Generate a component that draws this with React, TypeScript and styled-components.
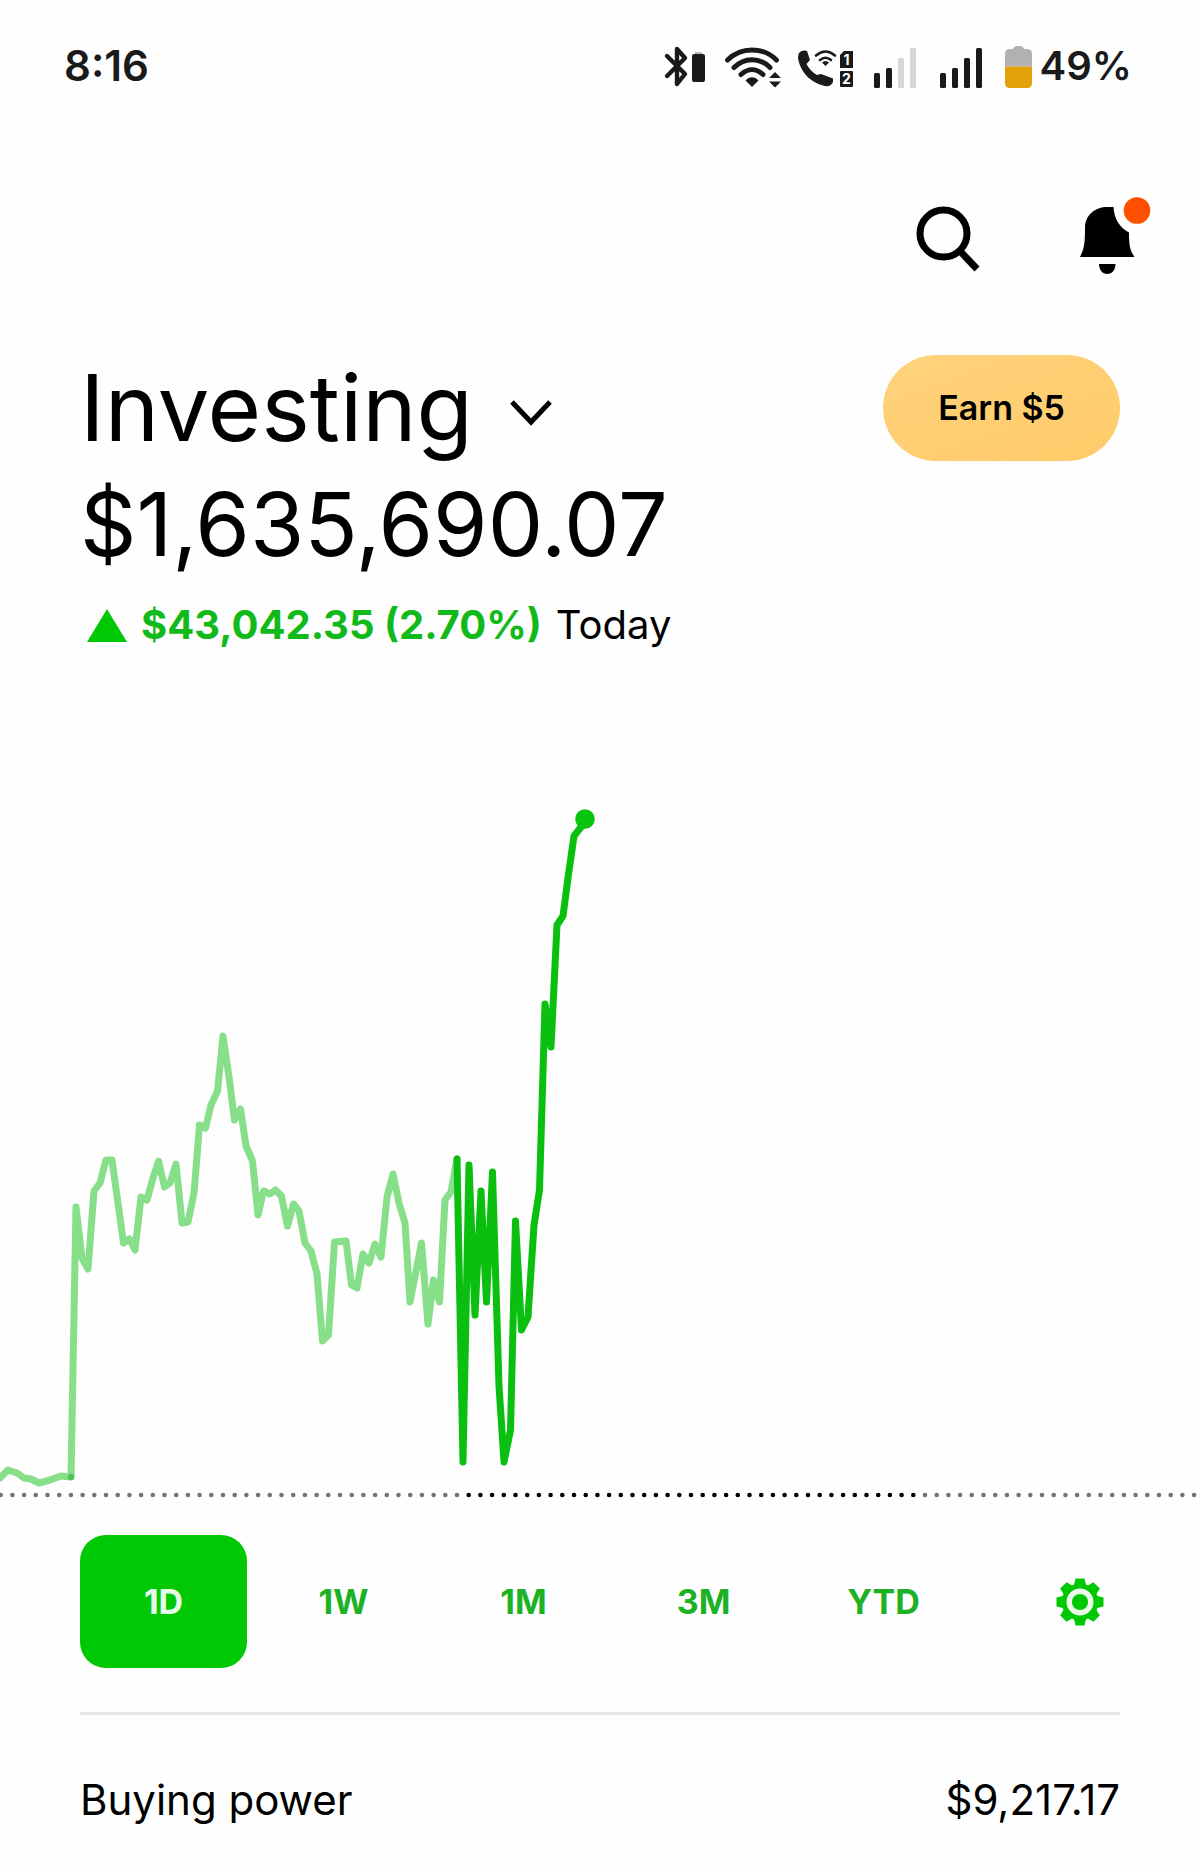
import React, { useState } from 'react';
import styled, { createGlobalStyle } from 'styled-components';

const GREEN = '#00c805';
const INK = '#1a1a1a';

const GlobalStyle = createGlobalStyle`
  *, *::before, *::after { box-sizing: border-box; }
  body {
    margin: 0;
    background: #fefefe;
    color: #000;
    font-family: Inter, Roboto, sans-serif;
  }
  button {
    font: inherit;
    color: inherit;
    padding: 0;
    border: 0;
    background: none;
    cursor: pointer;
  }
  svg { display: block; flex: none; }
`;

const Screen = styled.main`
  display: flex;
  flex-direction: column;
  padding-bottom: 47px;
`;

const StatusBar = styled.header`
  display: flex;
  align-items: center;
  justify-content: space-between;
  padding: 42px 68px 0 64px;
  font-size: 40px;
  line-height: 48px;
  font-weight: 600;
  color: ${INK};
`;

const Clock = styled.time`
  font-size: 42px;
`;

const StatusIcons = styled.div`
  display: flex;
  align-items: center;
  gap: 14px;
`;

const Battery = styled.div`
  display: flex;
  align-items: center;
  gap: 8px;
`;

const Actions = styled.nav`
  display: flex;
  justify-content: flex-end;
  gap: 96px;
  padding: 100px 48px 0 80px;
`;

const Summary = styled.section`
  display: flex;
  flex-direction: column;
  padding: 74px 80px 0;
`;

const TitleRow = styled.div`
  display: flex;
  align-items: center;
  justify-content: space-between;
`;

const Title = styled.h1`
  margin: 0;
  font-size: 92px;
  line-height: 108px;
  font-weight: 400;
`;

const AccountPicker = styled.button`
  display: flex;
  align-items: center;
  gap: 36px;
`;

const EarnButton = styled.button`
  height: 106px;
  padding: 0 55px;
  border-radius: 53px;
  background: linear-gradient(160deg, #ffd27c, #ffcb69);
  font-size: 34px;
  line-height: 40px;
  font-weight: 600;
`;

const Balance = styled.p`
  margin: 12px 0 0;
  font-size: 88px;
  line-height: 100px;
`;

const Change = styled.p`
  display: flex;
  align-items: center;
  gap: 14px;
  margin: 27px 0 0;
  padding-left: 7px;
  font-size: 40px;
  line-height: 48px;
`;

const Gain = styled.strong`
  font-weight: 700;
  color: #12b91a;
`;

const Chart = styled.svg`
  width: 100%;
  height: auto;
  margin-top: 51px;
`;

const Ranges = styled.div`
  display: flex;
  align-items: center;
  justify-content: space-between;
  gap: 13px;
  padding: 25px 80px 44px;
`;

const RangeTabs = styled.div`
  display: flex;
  flex: 0 1 887px;
  gap: 13px;
`;

const RangeTab = styled.button<{ $active: boolean }>`
  flex: 1;
  height: 133px;
  border-radius: 26px;
  background: ${(p) => (p.$active ? GREEN : 'transparent')};
  color: ${(p) => (p.$active ? '#e9fbe9' : '#1db125')};
  font-size: 34px;
  line-height: 40px;
  font-weight: 700;
`;

const SettingsButton = styled.button`
  display: grid;
  place-items: center;
  width: 80px;
  height: 80px;
`;

const DetailRow = styled.dl`
  display: flex;
  justify-content: space-between;
  margin: 0 80px;
  padding-top: 61px;
  border-top: 3px solid #e6e6e6;
  font-size: 42px;
  line-height: 48px;

  dd { margin: 0; }
`;

const BluetoothIcon = () => (
  <svg width="46" height="48" viewBox="0 0 46 48" aria-label="Bluetooth">
    <path
      d="M4 14 22 32 14 42V7L22 16 4 34"
      fill="none"
      stroke={INK}
      strokeWidth="4.400"
      strokeLinecap="round"
      strokeLinejoin="round"
    />
    <rect x="29" y="12" width="13" height="28" rx="2" fill={INK} />
    <rect x="32" y="10" width="7" height="2" fill="#b8b8b8" />
  </svg>
);

const WifiIcon = () => (
  <svg width="60" height="48" viewBox="0 0 60 48" aria-label="Wi-Fi">
    <g fill="none" stroke={INK} strokeWidth="5" strokeLinecap="round">
      <path d="M4.500 18C18 4.500 40 4.500 53.500 18" />
      <path d="M11 25.500C21.500 15 36.500 15 47 25.500" />
      <path d="M18 32.500C25 26 33 26 40 32.500" />
    </g>
    <path d="M22.500 38.500C26 34 32 34 35.500 38.500L29 45Z" fill={INK} />
    <path d="M46 36 52 30 58 36ZM46 39.500H58L52 45.500Z" fill={INK} />
  </svg>
);

const WifiCallingIcon = () => (
  <svg width="62" height="48" viewBox="0 0 62 48" aria-label="Wi-Fi calling, SIM 1 and 2">
    <path
      d="M2 11Q4 8 8 8.500L10 9 13 18 9.500 22Q13 29 20 33L24 32 36 36.500 36 40Q34 45 28 44C14 41 3 30 1 16Q1 13 2 11Z"
      fill={INK}
    />
    <g fill="none" stroke={INK} strokeWidth="2.600" strokeLinecap="round">
      <path d="M19 13.500Q28.500 5.500 38 13.500" />
      <path d="M23 18Q28.500 13.500 34 18" />
    </g>
    <path d="M25 20.500Q28.500 17.500 32 20.500L28.500 24Z" fill={INK} />
    <path d="M47 9H56V26H43V13Z" fill={INK} />
    <rect x="43" y="29" width="13" height="16" rx="1" fill={INK} />
    <g fill="#fff" fontSize="14" fontWeight="700" textAnchor="middle">
      <text x="49.500" y="22.500">1</text>
      <text x="49.500" y="42">2</text>
    </g>
  </svg>
);

const BARS = [15, 20, 30, 40];

const SignalIcon = ({ level }: { level: number }) => (
  <svg width="52" height="48" viewBox="0 0 52 48" aria-label={`Signal ${level} of 4`}>
    {BARS.map((h, i) => (
      <rect
        key={h}
        x={1 + i * 12}
        y={46 - h}
        width="6"
        height={h}
        rx="1.500"
        fill={i < level ? INK : '#d6d6d6'}
      />
    ))}
  </svg>
);

const BatteryIcon = () => (
  <svg width="27" height="48" viewBox="0 0 27 48" aria-label="Battery">
    <path
      d="M5 7H8Q9 4 12 4H15Q18 4 19 7H22Q27 7 27 12V24.500H0V12Q0 7 5 7Z"
      fill="#b1b1b1"
    />
    <path d="M0 24.500H27V41Q27 46 22 46H5Q0 46 0 41Z" fill="#e3a10a" />
  </svg>
);

const SearchIcon = () => (
  <svg width="68" height="90" viewBox="0 0 68 90" aria-hidden="true">
    <g fill="none" stroke="#000" strokeWidth="7">
      <circle cx="31.500" cy="43.500" r="23.500" />
      <path d="M47.500 60.500 65 79" />
    </g>
  </svg>
);

const BellIcon = () => (
  <svg width="76" height="90" viewBox="0 0 76 90" aria-hidden="true">
    <path
      d="M4 67C8 59 9 54 9 38C9 25 19 17 31.500 17H37.500C38 29 44 38 53 42.500C53 56 54 60 58.500 67Z"
      fill="#000"
    />
    <path d="M23 74H39.500C39.500 80 36 84 31.200 84C26.500 84 23 80 23 74Z" fill="#000" />
    <circle cx="61" cy="20.500" r="13.300" fill="#ff5000" />
  </svg>
);

const ChevronIcon = () => (
  <svg width="44" height="40" viewBox="0 0 44 40" aria-hidden="true">
    <path d="M3 14 22 34 41 14" fill="none" stroke="#000" strokeWidth="5" />
  </svg>
);

const UpIcon = () => (
  <svg width="40" height="34" viewBox="0 0 40 34" aria-label="Up">
    <path d="M20 1 40 34H0Z" fill={GREEN} />
  </svg>
);

const TEETH = [0, 45, 90, 135, 180, 225, 270, 315];

const GearIcon = () => (
  <svg width="48" height="48" viewBox="-24 -24 48 48" aria-hidden="true">
    <g fill={GREEN}>
      {TEETH.map((a) => (
        <path key={a} d="M-6.500 -15-4.500 -23.500H4.500L6.500 -15Z" transform={`rotate(${a})`} />
      ))}
      <circle r="18.500" />
    </g>
    <circle r="10.800" fill={GREEN} stroke="#eafbea" strokeWidth="5.400" />
  </svg>
);

const EARLY =
  '0,1478 8,1470 17,1473 24,1478 31,1479 39,1483 50,1480 61,1476 71,1477 76,1207 82,1258 88,1269 ' +
  '94,1191 100,1183 106,1160 112,1160 123.500,1243 129.500,1239 135,1250 141,1197 147,1200 153,1178 ' +
  '158.500,1161 164.500,1187 170,1183 176,1164 182,1223 188,1222 194,1193 199.500,1125 205.500,1128 ' +
  '211,1105 217.500,1091 223,1036 229,1077 234.500,1120 240.500,1109 246,1146 252.500,1161 258,1215 ' +
  '263.500,1191 270,1194 275.500,1190 281.500,1196 287.500,1226 293.500,1204 299,1211 305,1243 311,1251 ' +
  '317,1274 322.500,1341 328.500,1335 334.500,1242 346,1241 351.500,1285 357,1288 363,1254 369,1263 ' +
  '375,1244 381,1257 387,1197 393,1174 399,1203 405,1223 410,1302 421.500,1243 428,1324 433.500,1280 ' +
  '439.500,1302 445,1200 451,1192 457,1159';

const SESSION =
  '457,1159 463,1462 469,1165 475,1315 481,1191 486.500,1302 492.500,1172 499,1386 504,1462 510.500,1430 ' +
  '515.500,1221 521.500,1330 528,1317 534,1225 539.500,1190 545,1004 551,1047 557,925 563,916 ' +
  '568,878 574,836 585,822';

const DOT_GAP = 11.7;
const DOTS = Array.from({ length: 103 }, (_, i) => i);

const PriceChart = () => (
  <Chart viewBox="0 700 1200 810" role="img" aria-label="Portfolio value today">
    {DOTS.map((i) => (
      <circle
        key={i}
        cx={0.7 + i * DOT_GAP}
        cy="1495"
        r="2.300"
        fill={i >= 40 && i <= 78 ? '#000' : '#747474'}
      />
    ))}
    <g fill="none" strokeWidth="7" strokeLinecap="round" strokeLinejoin="round">
      <polyline points={EARLY} stroke="#87df8a" />
      <polyline points={SESSION} stroke="#0abf10" />
    </g>
    <circle cx="71" cy="1477" r="3.200" fill="#4fc456" />
    <circle cx="585" cy="819" r="9.800" fill="#08c40d" />
  </Chart>
);

const RANGES = ['1D', '1W', '1M', '3M', 'YTD'];

export default function App() {
  const [range, setRange] = useState('1D');

  return (
    <Screen>
      <GlobalStyle />
      <StatusBar>
        <Clock>8:16</Clock>
        <StatusIcons>
          <BluetoothIcon />
          <WifiIcon />
          <WifiCallingIcon />
          <SignalIcon level={2} />
          <SignalIcon level={4} />
          <Battery>
            <BatteryIcon />
            <span>49%</span>
          </Battery>
        </StatusIcons>
      </StatusBar>
      <Actions>
        <button type="button" aria-label="Search">
          <SearchIcon />
        </button>
        <button type="button" aria-label="Notifications">
          <BellIcon />
        </button>
      </Actions>
      <Summary>
        <TitleRow>
          <Title>
            <AccountPicker type="button">
              Investing
              <ChevronIcon />
            </AccountPicker>
          </Title>
          <EarnButton type="button">Earn $5</EarnButton>
        </TitleRow>
        <Balance>$1,635,690.07</Balance>
        <Change>
          <UpIcon />
          <Gain>$43,042.35 (2.70%)</Gain>
          <span>Today</span>
        </Change>
      </Summary>
      <PriceChart />
      <Ranges>
        <RangeTabs>
          {RANGES.map((r) => (
            <RangeTab key={r} type="button" $active={r === range} onClick={() => setRange(r)}>
              {r}
            </RangeTab>
          ))}
        </RangeTabs>
        <SettingsButton type="button" aria-label="Chart settings">
          <GearIcon />
        </SettingsButton>
      </Ranges>
      <DetailRow>
        <dt>Buying power</dt>
        <dd>$9,217.17</dd>
      </DetailRow>
    </Screen>
  );
}
